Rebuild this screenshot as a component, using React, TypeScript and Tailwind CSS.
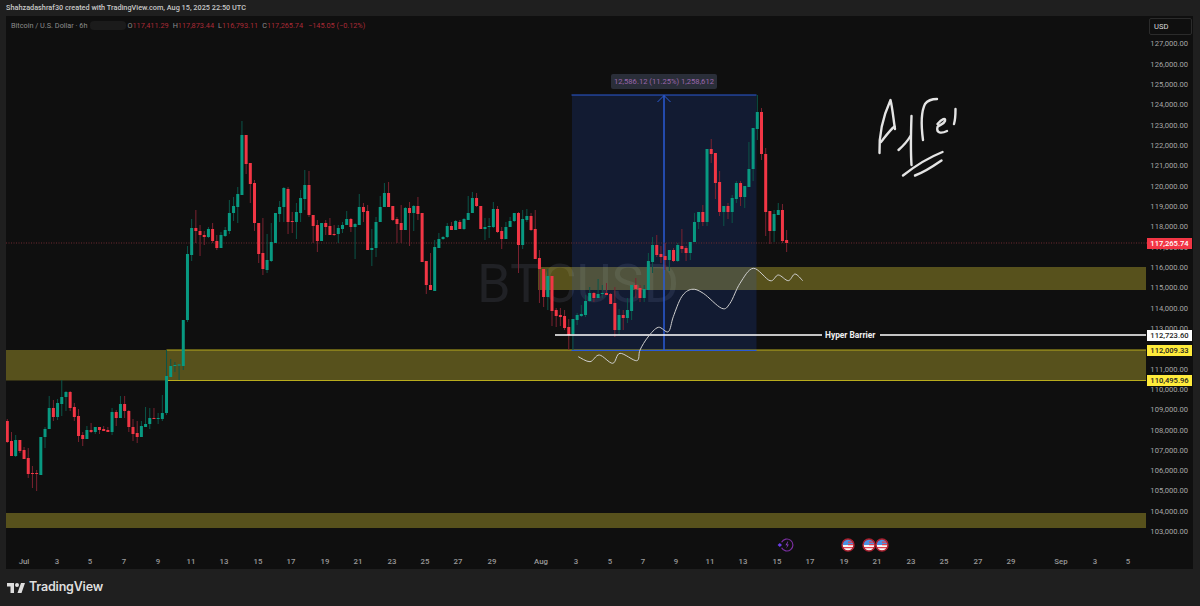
import { Fragment } from "react";

// [up?, wickTop, bodyTop, bodyBottom, wickBottom] in page pixels
const candles: [number, number, number, number, number][] = [
  [0,419,421,442,443],[0,432,441,456,456],[1,435,440,456,457],[0,440,440,451,453],[0,447,450,459,459],[0,448,458,474,478],[0,466,473,474,488],[0,470,473,474,491],[1,437,437,475,475],[1,427,429,437,448],
  [1,396,408,429,429],[0,400,408,417,421],[1,399,403,417,420],[1,380,397,404,416],[1,391,392,397,411],[0,391,392,408,411],[0,403,407,417,421],[0,409,416,436,442],[0,432,435,439,446],[1,426,430,439,439],
  [0,423,430,432,433],[1,427,427,432,434],[0,427,427,430,434],[0,426,429,431,431],[0,427,430,432,432],[1,408,412,432,435],[0,410,412,418,426],[1,396,404,418,418],[0,396,404,411,418],[0,410,411,427,432],
  [0,419,427,434,441],[0,421,433,437,443],[1,421,426,437,437],[1,407,424,427,427],[1,408,418,424,429],[0,408,418,419,419],[1,413,418,419,424],[1,395,413,419,421],[1,350,376,413,415],[1,359,366,377,377],
  [1,362,365,366,372],[1,364,364.5,365.5,380],[1,320,320,366,370],[1,246,254,320,322],[1,219,228,255,261],[0,210,228,231,243],[0,225,231,235,256],[0,231,235,237,245],[1,227,229,237,238],[0,223,229,241,243],
  [0,235,241,248,250],[1,232,235,248,248],[1,227,230,236,237],[1,200,213,231,234],[1,197,206,213,221],[1,187,194,207,223],[1,121,135,195,195],[0,135,135,164,174],[0,163,163,184,203],[0,180,183,223,231],
  [0,223,223,254,263],[0,218,253,269,275],[1,234,260,270,273],[1,223,242,261,262],[1,213,213,243,243],[1,201,207,214,222],[1,187,188,207,222],[0,187,189,222,234],[0,212,221,222,233],[1,203,212,222,239],
  [1,190,198,213,222],[1,170,185,199,210],[0,171,185,215,217],[0,215,215,226,243],[0,220,225,241,252],[1,223,223,241,241],[0,220,223,227,235],[0,218,226,235,235],[0,225,234,235,236],[1,225,228,234,243],
  [1,222,225,229,233],[1,211,219,225,225],[0,218,219,227,232],[1,223,224,227,259],[1,194,207,225,225],[0,203,207,212,222],[0,205,211,250,250],[1,229,248,250,266],[1,217,222,248,257],[1,196,207,222,222],
  [1,183,193,207,207],[0,182,193,207,207],[0,206,206,220,221],[0,217,219,224,243],[0,205,223,230,243],[1,207,208,230,230],[0,202,208,213,246],[1,205,206,213,231],[0,197,206,214,220],[0,213,213,262,262],
  [0,261,261,285,294],[0,253,285,290,290],[1,240,247,291,291],[1,233,239,248,248],[1,236,237,239,240],[1,223,226,237,238],[0,222,226,230,230],[1,220,221,230,230],[0,220,222,229,229],[1,218,219,229,230],
  [1,196,213,220,220],[1,192,198,213,213],[0,193,198,206,207],[0,206,206,229,229],[1,218,227,229,240],[1,218,226,227,238],[1,202,209,227,228],[0,206,209,232,233],[0,227,231,239,249],[1,222,227,239,239],
  [1,217,221,227,227],[1,213,213,221,222],[0,212,213,245,273],[1,210,219,245,249],[1,209,216,220,222],[0,213,216,230,231],[0,210,229,259,259],[0,250,258,269,303],[0,269,269,297,307],[1,269,276,297,310],
  [0,276,276,311,326],[0,308,310,316,327],[0,308,315,317,326],[0,310,316,328,330],[0,319,327,335,350],[1,319,319,334,350],[1,313,315,320,325],[1,305,314,316,317],[1,295,301,315,317],[1,287,293,301,302],
  [0,292,293,298,302],[1,279,294,298,298],[1,285,293,294,298],[0,283,293,295,295],[0,293,294,304,304],[0,287,303,330,337],[1,309,315,330,335],[0,310,315,318,330],[1,298,310,318,323],[1,285,285,311,320],
  [0,278,285,289,298],[0,285,288,298,302],[1,285,289,298,302],[1,253,261,290,290],[1,237,245,262,273],[0,235,245,255,257],[0,246,254,257,263],[0,243,256,260,270],[1,250,250,260,271],[0,248,250,261,262],
  [1,243,245,261,262],[0,229,246,249,253],[0,246,248,253,261],[1,242,242,253,260],[1,213,222,242,242],[1,212,212,222,229],[0,205,212,222,226],[1,149,149,222,226],[0,139,149,154,163],[0,153,153,183,199],
  [0,171,182,212,216],[1,206,206,212,226],[0,203,206,212,219],[1,195,198,212,223],[1,181,183,199,203],[0,181,183,197,206],[1,186,186,197,208],[1,142,169,187,187],[1,128,128,169,181],[1,95,112,129,140],
  [0,108,112,154,160],[0,148,154,212,236],[0,211,211,231,244],[1,210,214,231,242],[1,203,210,215,215],[0,204,210,241,243],[0,230,240,243,252],
];

const prices = ["127,000.00","126,000.00","125,000.00","124,000.00","123,000.00","122,000.00","121,000.00","120,000.00","119,000.00","118,000.00","117,000.00","116,000.00","115,000.00","114,000.00","113,000.00","112,000.00","111,000.00","110,000.00","109,000.00","108,000.00","107,000.00","106,000.00","105,000.00","104,000.00","103,000.00"];

const priceTags = [
  { text: "117,265.74", top: 222, cls: "bg-[#f23645] text-white" },
  { text: "112,723.60", top: 314, cls: "bg-white text-[#222]" },
  { text: "112,009.33", top: 329, cls: "bg-[#ffeb3b] text-[#222]" },
  { text: "110,495.96", top: 359, cls: "bg-[#ffeb3b] text-[#222]" },
];

const dates: [string, number][] = [["Jul",24],["3",57],["5",90],["7",124],["9",158],["11",191],["13",224],["15",258],["17",291],["19",325],["21",358],["23",392],["25",425],["27",458],["29",492],["Aug",541],["3",576],["5",610],["7",643],["9",676],["11",710],["13",743],["15",777],["17",810],["19",844],["21",877],["23",911],["25",944],["27",978],["29",1011],["Sep",1061],["3",1095],["5",1128]];

const sketch: [number, number][] = [[578.3,356.7],[590,361.7],[599.3,355],[612.7,363.3],[620,353.3],[636.7,360.7],[640,350],[648,337],[658.3,327.3],[668.3,331.7],[673.3,316.7],[681.7,296.7],[691.7,289.3],[703.3,293.3],[721.7,308.3],[730,303.3],[740,283.3],[753.3,268.3],[770,280.7],[778.3,275],[788.3,280.7],[795,274],[802.7,280.7]];

function smooth(pts: [number, number][]) {
  let d = `M${pts[0][0]} ${pts[0][1]}`;
  for (let i = 0; i < pts.length - 1; i++) {
    const p0 = pts[Math.max(i - 1, 0)];
    const p1 = pts[i];
    const p2 = pts[i + 1];
    const p3 = pts[Math.min(i + 2, pts.length - 1)];
    d += ` C${p1[0] + (p2[0] - p0[0]) / 6} ${p1[1] + (p2[1] - p0[1]) / 6} ${p2[0] - (p3[0] - p1[0]) / 6} ${p2[1] - (p3[1] - p1[1]) / 6} ${p2[0]} ${p2[1]}`;
  }
  return d;
}

function FlagIcon({ left }: { left: number }) {
  return (
    <svg className="absolute top-[522px] w-[14px] h-[14px]" style={{ left }} viewBox="0 0 14 14">
      <circle cx="7" cy="7" r="6" fill="#f5f5f5" />
      <path d="M2 4.500a5.500 5.500 0 0 1 10 0V7H2Z" fill="#4a90e2" />
      <path d="M7 3.600h5.400v1.200H7ZM7 6h5.600v1.200H7ZM2 9h10v1.300H2Z" fill="#e5404f" />
      <circle cx="7" cy="7" r="6" fill="none" stroke="#a8202f" strokeWidth="1.500" />
    </svg>
  );
}

function EarningsIcon() {
  return (
    <svg className="absolute top-[521px] left-[771px] w-[18px] h-[16px]" viewBox="0 0 18 16">
      <path d="M4.600 5.200a6 6 0 1 1 0 5.600" fill="none" stroke="#7b2fa0" strokeWidth="1.200" />
      <path d="M2.800 6 5 8l-2.200 2L.6 8Z" fill="#6a3de8" />
      <path d="M10.600 4.500 8.500 8.300h1.800L9.200 11.500l2.700-4h-1.800l1.100-3Z" fill="#8a3fc0" />
    </svg>
  );
}

function Chart() {
  return (
    <svg className="absolute inset-0 w-full h-full block" viewBox="6 16 1141 537">
      {/* zones */}
      <rect x="538" y="267" width="608" height="23" fill="#ffeb3b" fillOpacity=".3" />
      <rect x="6" y="350" width="1140" height="30.500" fill="#ffeb3b" fillOpacity=".3" />
      <rect x="6" y="513" width="1140" height="15" fill="#ffeb3b" fillOpacity=".3" />
      <path d="M166.500 350H1146M166.500 380.500H1146" stroke="#b9ac1d" strokeWidth="1" />

      {/* measure box */}
      <rect x="572" y="95" width="184.500" height="255" fill="#2962ff" fillOpacity=".15" />
      <path d="M571.500 95H756.500M571.500 350.500H756.500" stroke="#2a5bd6" strokeWidth="1" />
      <path d="M664 95.500V350" stroke="#2a5bd6" strokeWidth="1.500" />
      <path d="M657.500 102 664 95.500 670.500 102" fill="none" stroke="#2a5bd6" strokeWidth="1" />

      {/* last price */}
      <path d="M6 243H1147" stroke="#6e2830" strokeWidth="1" strokeDasharray="1 1.500" />

      {candles.map(([up, wt, bt, bb, wb], i) => {
        const x = 7.3 + 4.19 * i;
        return (
          <Fragment key={i}>
            <rect x={x - 0.5} y={wt} width="1" height={wb - wt} fill={up ? "#0b5549" : "#7a2230"} />
            <rect x={x - 1.5} y={bt} width="3" height={Math.max(bb - bt, 1)} fill={up ? "#089981" : "#f23645"} />
          </Fragment>
        );
      })}

      {/* hyper barrier */}
      <path d="M555 335H822M880 335H1146" stroke="#fff" strokeWidth="1.500" />

      {/* hand drawn */}
      <path d={smooth(sketch)} fill="none" stroke="#cfcfcf" strokeWidth="1" />
      <g fill="none" stroke="#e4e4e4" strokeWidth="2.400" strokeLinecap="round" strokeLinejoin="round">
        <path d="M879.500 153C879 140 881.500 120 890.500 100 892.500 108 893.500 120 895 129" />
        <path d="M881 142C885 137 890 130 894.500 126.500" />
        <path d="M898.500 150C903 146 907 142 910.500 136" />
        <path d="M911.500 116C911 130 910.500 150 911.500 165" />
        <path d="M923 140C921 125 921 112 925 104 928 100 932 99 937 99" />
        <path d="M937.500 124C942 119 946 117 945 121 944 124 939 125 937.500 127 936 133 941 134 947 131" />
        <path d="M954 124C955.500 119 955.500 114 955.500 109" />
        <path d="M903 175.500C915 166 930 157 942.500 152" />
        <path d="M915 175.500C925 172 935 165 941.500 160.500" />
      </g>
    </svg>
  );
}

export default function App() {
  return (
    <div className="w-[1200px] h-[606px] flex flex-col overflow-hidden bg-[#1f1f1f] font-['Roboto',sans-serif]">
      {/* Snapshot title */}
      <div className="h-4 pl-1.5 flex items-center text-[7.300px] font-medium text-[#c8c8c8] whitespace-nowrap">
        Shahzadashraf30 created with TradingView.com, Aug 15, 2025 22:50 UTC
      </div>

      {/* Chart panel */}
      <div className="ml-1.5 mr-[7px] h-[553px] flex flex-col bg-[#0f0f0f]">
        <div className="flex flex-1 min-h-0">
          <div className="relative flex-1 min-w-0">
            <div className="absolute left-[471px] top-[240px] text-[54px] leading-[56px] text-[#202125]">BTCUSD</div>
            <Chart />

            {/* legend */}
            <div className="absolute left-[5px] top-[5px] flex items-center text-[7.300px] leading-[9px] whitespace-nowrap text-[#8c8c8c]">
              <span>Bitcoin / U.S. Dollar · 6h</span>
              <span className="ml-[3px] w-[36px] h-[9px] rounded-[4px] bg-[#1b1b1b]" />
              <span className="ml-[1px]">O<span className="text-[#a92a36]">117,411.29</span></span>
              <span className="ml-[4px]">H<span className="text-[#a92a36]">117,873.44</span></span>
              <span className="ml-[4px]">L<span className="text-[#a92a36]">116,793.11</span></span>
              <span className="ml-[4px]">C<span className="text-[#a92a36]">117,265.74</span></span>
              <span className="ml-[5px] text-[#a92a36]">−145.05 (−0.12%)</span>
            </div>

            {/* measure tooltip */}
            <div className="absolute left-[605px] top-[58px] w-[106px] h-[15px] rounded-[2px] bg-[#2a2e39] flex items-center justify-center text-[7.600px] text-[#9a66ad] whitespace-nowrap">
              12,586.12 (11.25%) 1,258,612
            </div>

            {/* line label */}
            <div className="absolute left-[819px] top-[314px] text-[8.400px] leading-[10px] font-bold text-[#f0f0f0] whitespace-nowrap">Hyper Barrier</div>

            {/* events */}
            <EarningsIcon />
            <FlagIcon left={835} />
            <FlagIcon left={856} />
            <FlagIcon left={869} />
          </div>

          {/* Price scale */}
          <div className="relative w-[46px] pt-[17.800px] flex flex-col items-end pr-[5px] text-[7.600px] text-[#a6a6a6]">
            {prices.map((p) => (
              <div key={p} className="h-[20.330px] shrink-0 flex items-center whitespace-nowrap">{p}</div>
            ))}
            <div className="absolute left-[2px] top-[2px] w-[43px] h-[17px] rounded-[2px] border border-[#2b2b2b] bg-[#0f0f0f] pl-[4px] flex items-center text-[#dcdcdc]">USD</div>
            {priceTags.map((t) => (
              <div key={t.text} className={`absolute left-0 w-[45px] h-[10.500px] flex items-center justify-center font-medium ${t.cls}`} style={{ top: t.top }}>
                {t.text}
              </div>
            ))}
          </div>
        </div>

        {/* Time scale */}
        <div className="relative h-4 shrink-0 text-[7.800px] font-medium text-[#9a9a9a]">
          {dates.map(([label, x], i) => (
            <span key={i} className="absolute top-[3px] -translate-x-1/2" style={{ left: x - 6 }}>{label}</span>
          ))}
        </div>
      </div>

      {/* Footer logo */}
      <div className="flex-1 flex items-center pl-[7px] gap-[4px] text-[#dedede]">
        <svg className="w-[18px] h-[12px]" viewBox="0 0 36 24" fill="currentColor">
          <path d="M14 2H0v7h7v13h7V2Zm15 20h-8l7-20h8l-7 20ZM20 10a4 4 0 1 0 0-8 4 4 0 0 0 0 8Z" />
        </svg>
        <span className="text-[12.500px] font-semibold font-['Inter',sans-serif] tracking-[-0.2px]">TradingView</span>
      </div>
    </div>
  );
}
